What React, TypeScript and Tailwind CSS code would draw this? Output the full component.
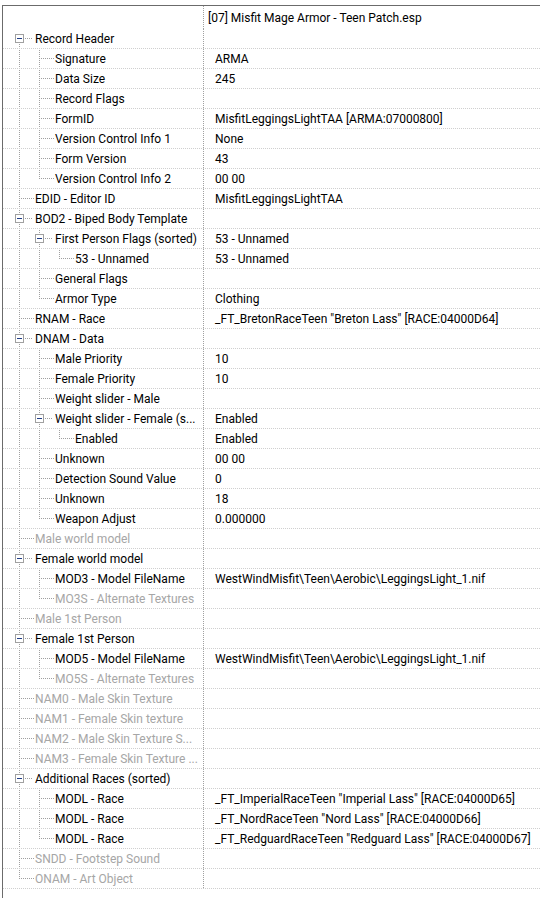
import React from 'react';

type Row = {
  label: string;
  value?: string;
  level: number;
  open?: boolean;
  off?: boolean;
};

const rows: Row[] = [
  { label: 'Record Header', level: 0, open: true },
  { label: 'Signature', value: 'ARMA', level: 1 },
  { label: 'Data Size', value: '245', level: 1 },
  { label: 'Record Flags', level: 1 },
  { label: 'FormID', value: 'MisfitLeggingsLightTAA [ARMA:07000800]', level: 1 },
  { label: 'Version Control Info 1', value: 'None', level: 1 },
  { label: 'Form Version', value: '43', level: 1 },
  { label: 'Version Control Info 2', value: '00 00', level: 1 },
  { label: 'EDID - Editor ID', value: 'MisfitLeggingsLightTAA', level: 0 },
  { label: 'BOD2 - Biped Body Template', level: 0, open: true },
  { label: 'First Person Flags (sorted)', value: '53 - Unnamed', level: 1, open: true },
  { label: '53 - Unnamed', value: '53 - Unnamed', level: 2 },
  { label: 'General Flags', level: 1 },
  { label: 'Armor Type', value: 'Clothing', level: 1 },
  { label: 'RNAM - Race', value: '_FT_BretonRaceTeen "Breton Lass" [RACE:04000D64]', level: 0 },
  { label: 'DNAM - Data', level: 0, open: true },
  { label: 'Male Priority', value: '10', level: 1 },
  { label: 'Female Priority', value: '10', level: 1 },
  { label: 'Weight slider - Male', level: 1 },
  { label: 'Weight slider - Female (s...', value: 'Enabled', level: 1, open: true },
  { label: 'Enabled', value: 'Enabled', level: 2 },
  { label: 'Unknown', value: '00 00', level: 1 },
  { label: 'Detection Sound Value', value: '0', level: 1 },
  { label: 'Unknown', value: '18', level: 1 },
  { label: 'Weapon Adjust', value: '0.000000', level: 1 },
  { label: 'Male world model', level: 0, off: true },
  { label: 'Female world model', level: 0, open: true },
  { label: 'MOD3 - Model FileName', value: 'WestWindMisfit\\Teen\\Aerobic\\LeggingsLight_1.nif', level: 1 },
  { label: 'MO3S - Alternate Textures', level: 1, off: true },
  { label: 'Male 1st Person', level: 0, off: true },
  { label: 'Female 1st Person', level: 0, open: true },
  { label: 'MOD5 - Model FileName', value: 'WestWindMisfit\\Teen\\Aerobic\\LeggingsLight_1.nif', level: 1 },
  { label: 'MO5S - Alternate Textures', level: 1, off: true },
  { label: 'NAM0 - Male Skin Texture', level: 0, off: true },
  { label: 'NAM1 - Female Skin texture', level: 0, off: true },
  { label: 'NAM2 - Male Skin Texture S...', level: 0, off: true },
  { label: 'NAM3 - Female Skin Texture ...', level: 0, off: true },
  { label: 'Additional Races (sorted)', level: 0, open: true },
  { label: 'MODL - Race', value: '_FT_ImperialRaceTeen "Imperial Lass" [RACE:04000D65]', level: 1 },
  { label: 'MODL - Race', value: '_FT_NordRaceTeen "Nord Lass" [RACE:04000D66]', level: 1 },
  { label: 'MODL - Race', value: '_FT_RedguardRaceTeen "Redguard Lass" [RACE:04000D67]', level: 1 },
  { label: 'SNDD - Footstep Sound', level: 0, off: true },
  { label: 'ONAM - Art Object', level: 0, off: true },
];

// is there another node at `level` further down, before the branch closes?
const hasLaterSibling = (i: number, level: number) => {
  for (let j = i + 1; j < rows.length; j++) {
    if (rows[j].level < level) return false;
    if (rows[j].level === level) return true;
  }
  return false;
};

const dot = (x: number, y: number) => `M${x} ${y}h1v1h-1z`;

const vDots = (x: number, y0: number, y1: number) => {
  let d = '';
  for (let y = y0; y <= y1; y += 2) d += dot(x, y);
  return d;
};

const hDots = (x0: number, x1: number, y: number) => {
  let d = '';
  for (let x = x0; x <= x1; x += 2) d += dot(x, y);
  return d;
};

const colX = (k: number) => 16 + 20 * k;
const MID = 9;

const TreeLines: React.FC<{ index: number }> = ({ index }) => {
  const row = rows[index];
  const L = row.level;
  const width = 32 + 20 * L;
  let d = '';

  for (let k = 0; k < L; k++) {
    if (hasLaterSibling(index, k)) d += vDots(colX(k), 1, 17);
  }

  const x = colX(L);
  if (index > 0) d += vDots(x, 1, MID);
  if (hasLaterSibling(index, L)) d += vDots(x, MID, 17);

  if (row.open) {
    d += hDots(x + 6, 29 + 20 * L, MID);
  } else {
    d += hDots(x + 2, 30 + 20 * L, MID);
  }

  return (
    <svg width={width} height={19} className="shrink-0" shapeRendering="crispEdges">
      <path d={d} fill="#a0a0a0" />
      {row.open && (
        <>
          <rect x={x - 3.5} y={MID - 3.5} width={8} height={8} fill="#ffffff" stroke="#a0a0a0" />
          <rect x={x - 2} y={MID} width={5} height={1} fill="#203d86" />
        </>
      )}
    </svg>
  );
};

export default function App() {
  return (
    <div
      className="w-[540px] h-[898px] bg-white overflow-hidden text-[12px] text-black"
      style={{ fontFamily: 'Roboto, "Liberation Sans", Arial, sans-serif' }}
    >
      <div className="ml-[2px] mt-[5px] border-l border-t border-[#6b6b6b] h-[893px]">
        <div className="flex h-[23px]">
          <div className="w-[201px] shrink-0 border-r border-dotted border-[#a0a0a0]" />
          <div className="flex-1 flex items-center pl-[4px] whitespace-nowrap">
            [07] Misfit Mage Armor - Teen Patch.esp
          </div>
        </div>
        {rows.map((row, i) => (
          <div key={i} className="flex h-[20px] border-b border-dotted border-[#cfcfcf]">
            <div className="w-[201px] shrink-0 flex items-center border-r border-dotted border-[#a0a0a0] overflow-hidden">
              <TreeLines index={i} />
              <span className={`whitespace-nowrap ${row.off ? 'text-[#a6a6a6]' : 'text-black'}`}>
                {row.label}
              </span>
            </div>
            <div className="flex-1 flex items-center pl-[11px] whitespace-nowrap">
              {row.value}
            </div>
          </div>
        ))}
      </div>
    </div>
  );
}
